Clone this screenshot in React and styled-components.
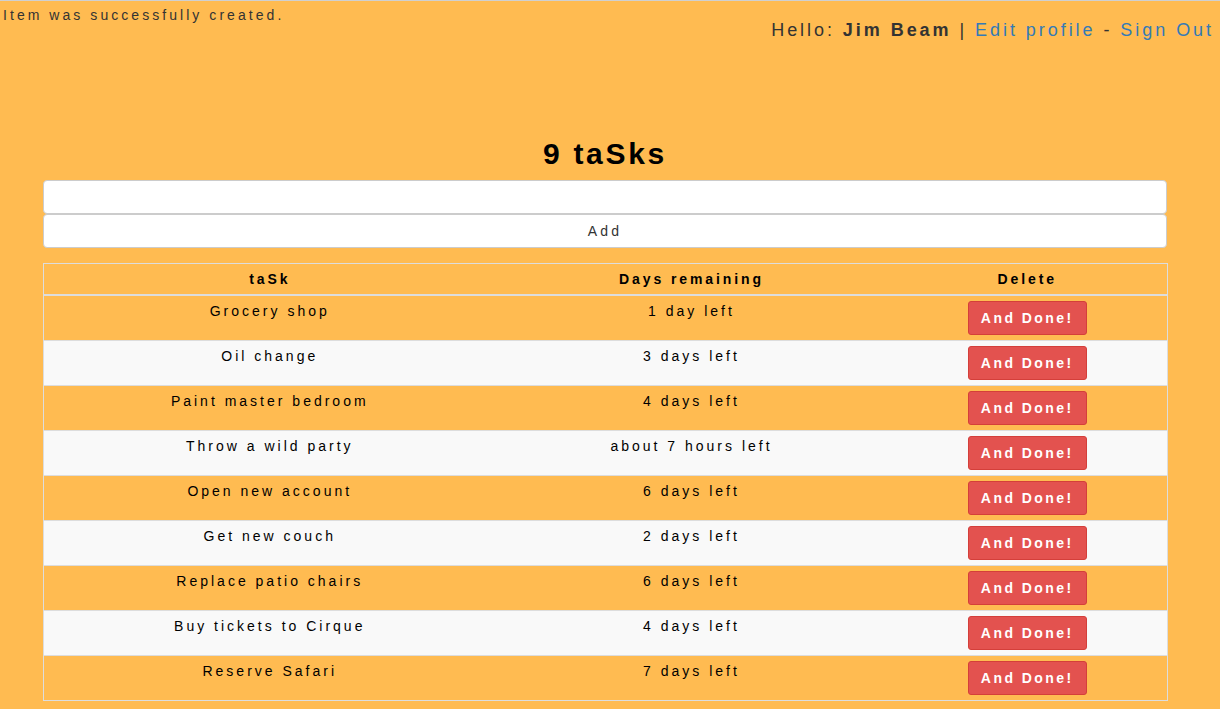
import React from "react";
import styled, { createGlobalStyle } from "styled-components";

const Global = createGlobalStyle`
  html, body { margin: 0; padding: 0; }
  body {
    background: #ffbb51;
    font-family: "Liberation Sans", Arial, sans-serif;
    color: #000;
    border-top: 1px solid #d0d0d0;
  }
`;

const TopBar = styled.header`
  display: flex;
  justify-content: space-between;
  align-items: flex-start;
  padding: 0 6px 0 3px;
  height: 120px;
`;

const Flash = styled.p`
  margin: 5px 0 0;
  font-size: 14px;
  line-height: 18px;
  letter-spacing: 3.05px;
  color: #333;
`;

const UserNav = styled.div`
  margin-top: 18px;
  font-size: 18px;
  line-height: 22px;
  letter-spacing: 2.95px;
  color: #333;
  b { font-weight: bold; }
`;

const NavLink = styled.a`
  color: #337ab7;
  text-decoration: none;
`;

const Container = styled.main`
  margin: 0 53px 0 43px;
`;

const Title = styled.h1`
  margin: 16px 0 10px;
  text-align: center;
  font-size: 30px;
  line-height: 33px;
  letter-spacing: 2.7px;
  font-weight: bold;
`;

const Field = styled.input`
  display: block;
  box-sizing: border-box;
  width: 100%;
  height: 34px;
  border: 1px solid #ccc;
  border-radius: 4px;
  background: #fff;
  margin: 0;
`;

const AddButton = styled.button`
  display: block;
  box-sizing: border-box;
  width: 100%;
  height: 34px;
  margin: 0 0 15px;
  border: 1px solid #ccc;
  border-radius: 4px;
  background: #fff;
  font-family: inherit;
  font-size: 14px;
  letter-spacing: 3.2px;
  color: #333;
`;

const Table = styled.table`
  width: 100%;
  border-collapse: collapse;
  border: 1px solid #ddd;
  table-layout: fixed;
  font-size: 14px;
  letter-spacing: 3px;
`;

const Th = styled.th`
  box-sizing: border-box;
  width: ${(p) => p.$w}px;
  padding: 8px 8px 7px;
  line-height: 15px;
  font-weight: bold;
  text-align: center;
  letter-spacing: 2.9px;
  border-bottom: 2px solid #ddd;
`;

const Row = styled.tr`
  background: ${(p) => (p.$alt ? "#f9f9f9" : "transparent")};
  border-top: 1px solid #ddd;
`;

const Td = styled.td`
  padding: 6px 8px 5px;
  height: 33px;
  line-height: 18px;
  text-align: center;
  vertical-align: top;
`;

const DoneButton = styled.button`
  display: block;
  box-sizing: border-box;
  width: 119px;
  height: 34px;
  margin: -1px auto 0;
  border: 1px solid #d43f3a;
  border-radius: 3px;
  background: #e3524f;
  color: #fff;
  font-family: inherit;
  font-size: 14px;
  font-weight: bold;
  letter-spacing: 2.45px;
`;

const tasks = [
  ["Grocery shop", "1 day left"],
  ["Oil change", "3 days left"],
  ["Paint master bedroom", "4 days left"],
  ["Throw a wild party", "about 7 hours left"],
  ["Open new account", "6 days left"],
  ["Get new couch", "2 days left"],
  ["Replace patio chairs", "6 days left"],
  ["Buy tickets to Cirque", "4 days left"],
  ["Reserve Safari", "7 days left"],
];

export default function App() {
  return (
    <>
      <Global />
      <TopBar>
        <Flash>Item was successfully created.</Flash>
        <UserNav>
          Hello: <b>Jim Beam</b> | <NavLink href="#">Edit profile</NavLink> -{" "}
          <NavLink href="#">Sign Out</NavLink>
        </UserNav>
      </TopBar>
      <Container>
        <Title>9 taSks</Title>
        <Field type="text" />
        <AddButton>Add</AddButton>
        <Table>
          <thead>
            <tr>
              <Th $w={452}>taSk</Th>
              <Th $w={392}>Days remaining</Th>
              <Th $w={280}>Delete</Th>
            </tr>
          </thead>
          <tbody>
            {tasks.map(([name, days], i) => (
              <Row key={name} $alt={i % 2 === 1}>
                <Td>{name}</Td>
                <Td>{days}</Td>
                <Td>
                  <DoneButton>And Done!</DoneButton>
                </Td>
              </Row>
            ))}
          </tbody>
        </Table>
      </Container>
    </>
  );
}
